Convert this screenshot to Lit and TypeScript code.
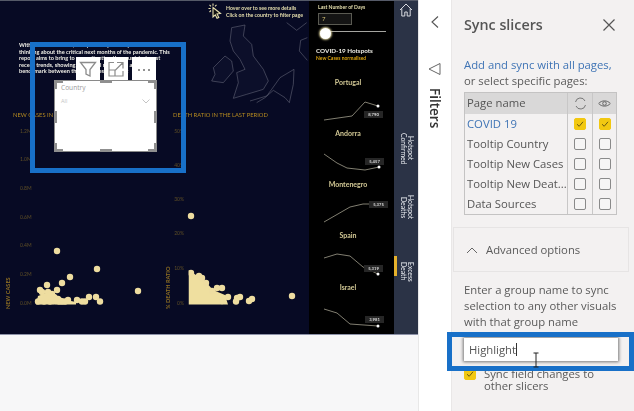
import { LitElement, html, css, svg } from "lit";
import { customElement } from "lit/decorators.js";

type P = [number, number];
const rel = (pts: P[]) => pts.map((p) => p.join(",")).join(" ");

const blob1: P[] = [[38,302],[41,300],[44,301],[47,299],[50,301],[53,300],[56,300],[59,302],[62,301],[65,302],[46,296],[50,295],[54,296],[48,291],[52,293],[44,298],[58,298]];
const dots1: P[] = [[57,250],[97,268],[138,290],[70,276],[62,282],[47,284],[40,289],[42,291],[57,289],[89,296],[96,296],[100,301],[77,299],[68,299],[85,301],[82,302]];
const dots2: P[] = [[191,215],[292,295],[191,272],[199,275],[202,277],[206,282],[217,287],[222,287],[228,296],[240,296],[237,297],[252,298],[249,300],[236,302],[212,290],[222,300]];

const yTicks1: [string, number][] = [["1.2M",131],["1.0M",159],["0.8M",188],["0.6M",217],["0.4M",245],["0.2M",274],["0.0M",303]];
const yTicks2: [string, number][] = [["50%",131],["40%",165],["30%",199],["20%",233],["10%",268],["0%",303]];

const hotspots = [
  { name: "Portugal", value: "8,790", top: 33, left: 55, pts: [[15,42],[43,38],[56,24],[69,28]] as P[] },
  { name: "Andorra", value: "5,457", top: 29, left: 56, pts: [[15,25],[28,34],[38,39],[56,41],[70,38]] as P[] },
  { name: "Montenegro", value: "5,375", top: 21, left: 60, pts: [[15,42],[41,27],[54,24],[71,24]] as P[] },
  { name: "Spain", value: "5,319", top: 34, left: 55, pts: [[15,27],[28,23],[41,25],[54,36],[69,43]] as P[] },
  { name: "Israel", value: "3,981", top: 33, left: 56, pts: [[15,26],[28,30],[41,41],[69,43]] as P[] },
];

const pages = [
  { name: "COVID 19", on: true },
  { name: "Tooltip Country", on: false },
  { name: "Tooltip New Cases", on: false },
  { name: "Tooltip New Deat...", on: false },
  { name: "Data Sources", on: false },
];

const check = svg`<svg class="tick" viewBox="0 0 12 12"><path d="M3 6.200 5.200 8.300 9 3.800" fill="none" stroke="#6b5a10" stroke-width="1"/></svg>`;

@customElement("app-root")
export class AppRoot extends LitElement {
  static styles = css`
    :host { display: block; width: 634px; height: 411px; overflow: hidden; position: relative; font-family: "Open Sans", "Noto Sans", sans-serif; background: #f8f8f8; }
    .page { display: flex; width: 634px; height: 411px; filter: blur(0.45px); }
    .left { width: 418px; display: flex; flex-direction: column; background: #f7f7f8; }
    .report { display: flex; height: 333px; border-top: 1px solid #555a68; border-bottom: 1px solid #8d92a8; box-sizing: content-box; }
    .main { width: 309px; position: relative; background: #070a24; overflow: hidden; }
    .intro { position: absolute; left: 19px; top: 41px; font: 700 5.6px/6.6px Lato, sans-serif; color: #efeee6; white-space: nowrap; }
    .hint { position: absolute; left: 208px; top: 2px; display: flex; gap: 4px; align-items: flex-start; color: #e6dfae; font: 700 5.2px/6.6px Lato, sans-serif; white-space: nowrap; }
    .hint svg { width: 14px; height: 16px; flex: none; }
    .hint div { padding-top: 2px; }
    .map { position: absolute; left: 170px; top: 0; width: 140px; height: 110px; }
    .charts { position: absolute; left: 0; top: 0; width: 309px; height: 333px; }
    .charts text { font-family: Lato, sans-serif; }
    .title { font-size: 5.8px; fill: #b58a20; }
    .tick-l { font-size: 5px; fill: #5f4f26; }
    .axis { font-size: 5.6px; fill: #8f6f22; font-weight: 700; }
    .hot { width: 85px; background: #000; display: flex; flex-direction: column; padding: 3px 0 0 9px; box-sizing: border-box; color: #e6dfae; font-family: Lato, sans-serif; }
    .lbl { font-size: 5.1px; font-weight: 700; line-height: 7px; }
    .days { width: 34px; height: 12px; border: 1px solid #5a5a52; box-sizing: border-box; font-size: 6px; line-height: 10px; padding-left: 3px; margin-top: 2px; background: #141414; color: #d8c477; }
    .slider { display: flex; align-items: center; height: 12px; margin: 3px 0 0 2px; width: 66px; position: relative; }
    .track { flex: 1; height: 1.5px; background: #a5a5a0; }
    .knob { position: absolute; left: 0; top: 0; width: 11px; height: 11px; border-radius: 50%; background: #fff; box-shadow: 0 0 2px 1px #d8cf9a; }
    .hot h2 { margin: 11px 0 0 -2px; font-size: 6.3px; line-height: 9px; font-weight: 700; color: #efeee6; white-space: nowrap; }
    .sub { margin-left: -2px; font-size: 5px; line-height: 7px; font-weight: 700; color: #dca40f; white-space: nowrap; }
    .list { margin: 16px 0 0 -9px; width: 85px; display: flex; flex-direction: column; }
    .spot { height: 51.3px; position: relative; text-align: center; font-size: 7px; line-height: 9px; font-weight: 700; color: #d2c895; padding-right: 7px; box-sizing: border-box; }
    .spot svg { position: absolute; left: 0; top: 0; width: 85px; height: 52px; }
    .badge { position: absolute; width: 19px; height: 7px; background: #262626; color: #ddd; font-size: 4.2px; line-height: 7px; text-align: center; font-weight: 700; padding: 0; }
    .nav { width: 24px; background: #2b3346; position: relative; display: flex; flex-direction: column; align-items: center; color: #eef0f4; font: 400 6.8px/7.5px Lato, sans-serif; }
    .home { width: 14px; height: 14px; margin-top: 2px; }
    .tab { writing-mode: vertical-rl; text-align: center; white-space: nowrap; margin-left: 1px; }
    .t1 { margin-top: 114px; height: 35px; }
    .t2 { margin-top: 29px; height: 25px; }
    .t3 { margin-top: 39px; height: 25px; }
    .bar { position: absolute; left: 0; top: 255px; width: 3px; height: 20px; background: #e5b12c; }
    .rail { width: 33px; background: #fff; display: flex; flex-direction: column; align-items: center; color: #4a4a4a; border-left: 1px solid #e8e8e8; box-sizing: border-box; }
    .rail svg { display: block; }
    .chev { width: 10px; height: 14px; margin-top: 15px; }
    .funnel { width: 14px; height: 14px; margin-top: 33px; }
    .rail span { writing-mode: vertical-rl; font: 600 13.500px/14px "Open Sans", sans-serif; color: #333; margin-top: 12px; }
    .panel { flex: 1; background: #f3f1f1; color: #5a5a5a; font-size: 11.3px; line-height: 16px; display: flex; flex-direction: column; border-left: 1px solid #e9e7e7; box-sizing: border-box; }
    .head { display: flex; justify-content: space-between; align-items: center; padding: 14px 18px 0 12px; height: 36px; box-sizing: border-box; }
    .head b { font-size: 14.3px; font-weight: 600; color: #555; }
    .head svg { width: 14px; height: 14px; }
    .intro2 { padding: 21px 0 0 12px; white-space: nowrap; }
    .intro2 a { color: #3f74b5; display: block; }
    .table { margin: 3px 0 0 12px; width: 153px; border: 1px solid #c4c3c3; box-sizing: border-box; display: grid; grid-template-columns: 102px 25px 24px; }
    .c { height: 20px; display: flex; align-items: center; justify-content: center; border-left: 1px solid #c8c7c7; box-sizing: border-box; }
    .n { height: 20px; line-height: 20px; padding-left: 2px; white-space: nowrap; color: #555; }
    .n.blue { color: #3f74b5; }
    .hd { height: 21px; background: #d9d8d8; line-height: 19px; }
    .c.hd svg { width: 13px; height: 13px; }
    .box { width: 12px; height: 12px; border: 1px solid #8a8a8a; border-radius: 2px; box-sizing: border-box; background: #f6f5f5; position: relative; }
    .box.on { background: #f2c811; border-color: #f2c811; }
    .tick { position: absolute; left: -1px; top: -1px; width: 12px; height: 12px; }
    .adv { margin: 12px 5px 0 1px; height: 45px; border: 1px solid #e6e4e4; box-sizing: border-box; display: flex; align-items: center; padding-left: 12px; gap: 8px; }
    .adv svg { width: 12px; height: 8px; }
    .desc { padding: 10px 0 0 12px; white-space: nowrap; }
    .field { margin: 8px 0 0 12px; width: 154px; height: 23px; background: #fff; box-shadow: 0 0 3px 1px #777; line-height: 23px; padding-left: 5px; box-sizing: border-box; color: #555; position: relative; font-size: 11.3px; }
    .caret { display: inline-block; width: 1px; height: 13px; background: #333; vertical-align: -2px; }
    .sync { display: flex; margin: 7px 0 0 12px; gap: 8px; line-height: 12px; }
    .sync .box { margin-top: 0; flex: none; }
    .overlay { position: absolute; border: 5px solid #1870c8; box-sizing: border-box; pointer-events: none; }
    .o1 { left: 30px; top: 42px; width: 156px; height: 131px; }
    .o2 { left: 447px; top: 332px; width: 187px; height: 39px; }
    .visual { position: absolute; left: 55px; top: 81px; width: 101px; height: 70px; background: #fff; color: #a8a8a8; font: 400 5.6px/7px "Open Sans", sans-serif; box-shadow: 0 0 0 1px #8a8a8a; padding: 3px 6px; box-sizing: border-box; }
    .vs { font-size: 6.6px; display: block; color: #9b9b9b; }
    .dd { display: flex; justify-content: space-between; align-items: center; margin-top: 7px; color: #c4c4c4; }
    .dd svg { width: 8px; height: 5px; }
    .h { position: absolute; background: #8f8f8f; }
    .btns { position: absolute; left: 76px; top: 57px; display: flex; gap: 4px; }
    .btn { width: 24px; height: 23px; background: #fff; display: flex; align-items: center; justify-content: center; }
    .btn svg { width: 18px; height: 18px; }
    .ibeam { position: absolute; left: 532px; top: 352px; width: 8px; height: 16px; }
  `;

  private chart() {
    return svg`<svg class="charts" viewBox="0 0 309 333">
      <text class="title" x="13" y="116">NEW CASES IN THE LAST PERIOD</text>
      <text class="title" x="173" y="116">DEATH RATIO IN THE LAST PERIOD</text>
      ${yTicks1.map(([t, y]) => svg`<text class="tick-l" x="20" y=${y + 1}>${t}</text>`)}
      ${yTicks2.map(([t, y]) => svg`<text class="tick-l" x="184" y=${y + 1} text-anchor="end">${t}</text>`)}
      <text class="axis" transform="translate(10 308) rotate(-90)">NEW CASES</text>
      <text class="axis" transform="translate(170 308) rotate(-90)">% DEATH RATIO</text>
      <polygon points="36,303.500 38,295 46,292 56,294 66,299 76,301 76,303.500" fill="#efdf9f"/>
      ${blob1.concat(dots1).map(([x, y]) => svg`<circle cx=${x} cy=${Math.min(y, 300.5)} r="3.2" fill="#eeddA0"/>`)}
      <polygon points="188.500,269 193,272 205,280 213,289 225,294 228,303.500 188.500,303.500" fill="#efdf9f"/>
      ${dots2.map(([x, y]) => svg`<circle cx=${x} cy=${Math.min(y, 300.5)} r="3.2" fill="#eeddA0"/>`)}
      <rect x="184.500" y="262" width="4" height="45" fill="#070a24"/>
    </svg>`;
  }

  private map() {
    return svg`<svg class="map" viewBox="0 0 420 330" fill="none" stroke="#6d7080" stroke-width="1.600" stroke-linejoin="round">
      <path d="M185 80 225 72 220 105 245 130 250 165 280 205 295 240 280 265 230 280 190 292 205 245 200 215 225 205 210 175 190 150 180 120Z" fill="#0c0f2a"/>
      <path d="M130 200 165 165 185 180 190 210 160 245 125 240 135 220Z" fill="#0c0f2a"/>
      <path d="M240 300 290 285 305 265 330 230 372 205 370 250 358 305 345 290 310 268 285 290 260 305"/>
      <path d="M350 65 380 88 410 65"/>
      <path d="M412 110 392 118 388 150 412 178"/>
    </svg>`;
  }

  private icons() {
    return {
      funnel: svg`<svg viewBox="0 0 18 18" fill="none" stroke="#8c8c8c" stroke-width="1.300"><path d="M1.500 2.500h15L11 9.500V16l-4-2V9.500Z"/></svg>`,
      focus: svg`<svg viewBox="0 0 18 18" fill="none" stroke="#8c8c8c" stroke-width="1.200"><path d="M7 2.500H2v13.500h14V11M10 2.500h6v6M16 2.500 8.500 10M2 10h6v6"/></svg>`,
      more: svg`<svg viewBox="0 0 18 18" fill="#6f6f6f"><circle cx="4" cy="10" r="1"/><circle cx="9" cy="10" r="1"/><circle cx="14" cy="10" r="1"/></svg>`,
    };
  }

  render() {
    const ic = this.icons();
    return html`
      <div class="page">
        <div class="left">
          <div class="report">
            <div class="main">
              ${this.map()} ${this.chart()}
              <div class="intro">
                With the current data, every country is everywhere now<br />
                thinking about the critical next months of the pandemic. This<br />
                report aims to bring to your attention the countries' most<br />
                recent trends, showing the actual new cases and a<br />
                benchmark between the countries in the list
              </div>
              <div class="hint">
                <svg viewBox="0 0 14 16" fill="none" stroke="#e6dfae" stroke-width="1.100"><path d="M5 4.500 12.500 10.500 9 11 10.800 14.500 9 15.300 7.300 11.800 5 14Z" fill="#111"/><path d="M5 .5v2.200M1.500 1.800 3 3.300M.5 5.500h2.200M8.500 1.800 7 3.300M1.500 9 3 7.500"/></svg>
                <div>Hover over to see more details<br />Click on the country to filter page</div>
              </div>
            </div>
            <div class="hot">
              <div class="lbl">Last Number of Days</div>
              <div class="days">7</div>
              <div class="slider"><div class="track"></div><div class="knob"></div></div>
              <h2>COVID-19 Hotspots</h2>
              <div class="sub">New Cases normalised</div>
              <div class="list">
                ${hotspots.map(
                  (h) => html`<div class="spot">
                    <svg viewBox="0 0 85 52" fill="none">
                      <polyline points=${rel(h.pts)} stroke="#b8b4a0" stroke-width="0.7"/>
                      <circle cx=${h.pts[h.pts.length - 1][0]} cy=${h.pts[h.pts.length - 1][1]} r="1.500" fill="#fff"/>
                    </svg>
                    ${h.name}
                    <div class="badge" style="left:${h.left}px;top:${h.top}px">${h.value}</div>
                  </div>`
                )}
              </div>
            </div>
            <div class="nav">
              <svg class="home" viewBox="0 0 14 14" fill="none" stroke="#d8dadf" stroke-width="1"><path d="M1 7 7 1l6 6M2.800 5.500V13h3V9h2.400v4h3V5.500"/></svg>
              <div class="tab t1">Hotspot<br />Confirmed</div>
              <div class="tab t2">Hotspot<br />Deaths</div>
              <div class="tab t3">Excess<br />Death</div>
              <div class="bar"></div>
            </div>
          </div>
        </div>
        <div class="rail">
          <svg class="chev" viewBox="0 0 10 14" fill="none" stroke="#555" stroke-width="1.100"><path d="M8 1.500 2 7l6 5.500"/></svg>
          <svg class="funnel" viewBox="0 0 14 14" fill="none" stroke="#666" stroke-width="1"><path d="M1 7 12 1.500v11Z"/></svg>
          <span>Filters</span>
        </div>
        <div class="panel">
          <div class="head">
            <b>Sync slicers</b>
            <svg viewBox="0 0 14 14" fill="none" stroke="#555" stroke-width="1.200"><path d="M1.500 1.500l11 11M12.500 1.500l-11 11"/></svg>
          </div>
          <div class="intro2">
            <a>Add and sync with all pages,</a>
            or select specific pages:
          </div>
          <div class="table">
            <div class="n hd">Page name</div>
            <div class="c hd"><svg viewBox="0 0 13 13" fill="none" stroke="#777" stroke-width="1"><path d="M1.500 5A5 5 0 0 1 11 4M11.500 8A5 5 0 0 1 2 9"/></svg></div>
            <div class="c hd"><svg viewBox="0 0 13 13" fill="none" stroke="#666" stroke-width="1"><path d="M.7 6.500C3.500 3 9.500 3 12.300 6.500 9.500 10 3.500 10 .7 6.500Z"/><circle cx="6.500" cy="6.500" r="1.800"/></svg></div>
            ${pages.map(
              (p) => html`<div class="n ${p.on ? "blue" : ""}">${p.name}</div>
                <div class="c"><div class="box ${p.on ? "on" : ""}">${p.on ? check : ""}</div></div>
                <div class="c"><div class="box ${p.on ? "on" : ""}">${p.on ? check : ""}</div></div>`
            )}
          </div>
          <div class="adv">
            <svg viewBox="0 0 12 8" fill="none" stroke="#666" stroke-width="1"><path d="M1 7 6 2l5 5"/></svg>
            Advanced options
          </div>
          <div class="desc">Enter a group name to sync<br />selection to any other visuals<br />with that group name</div>
          <div class="field">Highlight<span class="caret"></span></div>
          <div class="sync">
            <div class="box on">${check}</div>
            <div>Sync field changes to<br />other slicers</div>
          </div>
        </div>
      </div>
      <div class="overlay o1"></div>
      <div class="overlay o2"></div>
      <div class="btns">
        <div class="btn">${ic.funnel}</div>
        <div class="btn">${ic.focus}</div>
        <div class="btn">${ic.more}</div>
      </div>
      <div class="visual">
        <span class="vs">Country</span>
        <div class="dd">All <svg viewBox="0 0 8 5" fill="none" stroke="#b5b5b5" stroke-width=".8"><path d="M.5.500 4 4 7.500.500"/></svg></div>
        <div class="h" style="left:-1px;top:-1px;width:9px;height:3px"></div>
        <div class="h" style="left:-1px;top:-1px;width:3px;height:9px"></div>
        <div class="h" style="right:-1px;top:-1px;width:9px;height:3px"></div>
        <div class="h" style="right:-1px;top:-1px;width:3px;height:9px"></div>
        <div class="h" style="left:-1px;bottom:-1px;width:9px;height:3px"></div>
        <div class="h" style="left:-1px;bottom:-1px;width:3px;height:9px"></div>
        <div class="h" style="right:-1px;bottom:-1px;width:9px;height:3px"></div>
        <div class="h" style="right:-1px;bottom:-1px;width:3px;height:9px"></div>
        <div class="h" style="left:45px;top:-1px;width:12px;height:3px"></div>
        <div class="h" style="left:45px;bottom:-1px;width:12px;height:3px"></div>
        <div class="h" style="left:-1px;top:30px;width:3px;height:12px"></div>
        <div class="h" style="right:-1px;top:30px;width:3px;height:12px"></div>
      </div>
      <svg class="ibeam" viewBox="0 0 8 16" fill="none" stroke="#222" stroke-width="1"><path d="M1.500 1h5M4 1v14M1.500 15h5"/></svg>
    `;
  }
}
